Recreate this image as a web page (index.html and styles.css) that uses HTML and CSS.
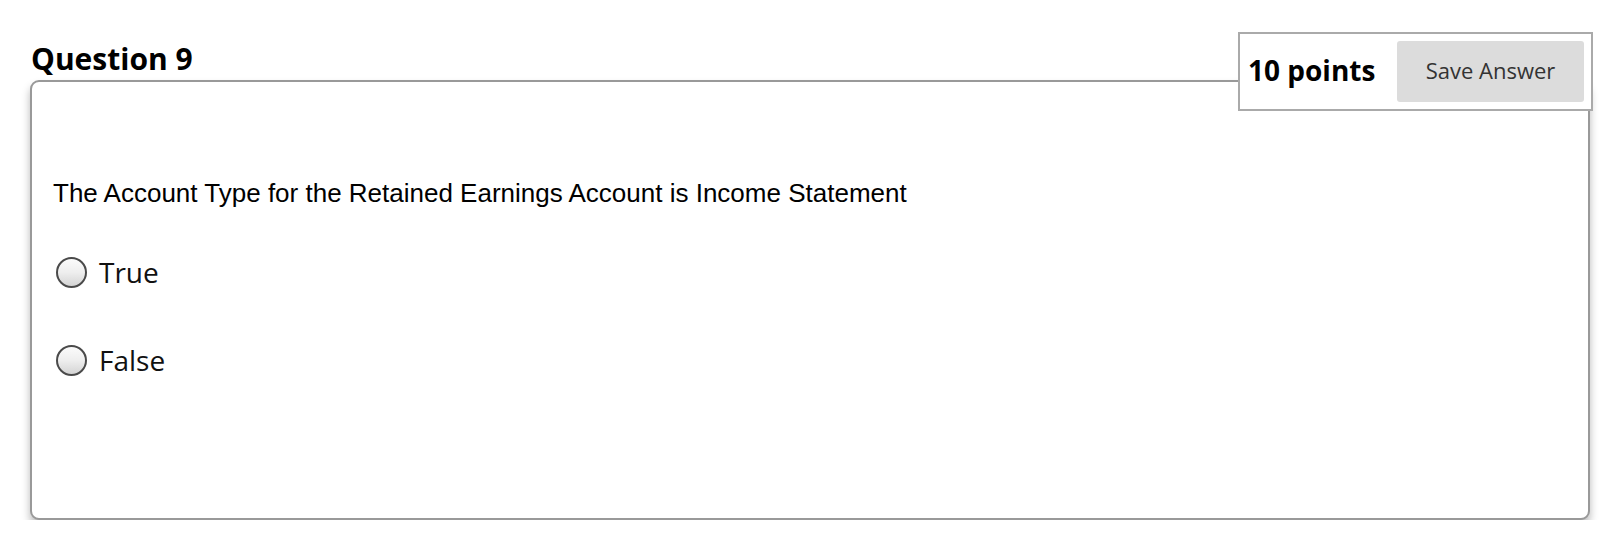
FILE: index.html
```html
<!DOCTYPE html>
<html>
<head>
<meta charset="utf-8">
<link rel="stylesheet" href="styles.css">
</head>
<body>
<div class="page">
  <h2 class="q-title">Question 9</h2>
  <div class="q-box">
    <p class="q-text">The Account Type for the Retained Earnings Account is Income Statement</p>
    <div class="options">
      <label class="option"><span class="radio"></span><span class="opt-label">True</span></label>
      <label class="option"><span class="radio"></span><span class="opt-label">False</span></label>
    </div>
  </div>
  <div class="points-box">
    <span class="points">10 points</span>
    <button class="save-btn">Save Answer</button>
  </div>
</div>
</body>
</html>
```
FILE: styles.css
```css
html, body {
  margin: 0;
  padding: 0;
  background: #fff;
}
.page {
  position: relative;
  padding: 39px 30px 0 30px;
  font-family: "Open Sans", "Liberation Sans", sans-serif;
}
.q-title {
  margin: 0 0 1px 1px;
  font-size: 30px;
  line-height: 40px;
  font-weight: 700;
  color: #000;
}
.q-box {
  box-sizing: border-box;
  width: 1560px;
  height: 440px;
  border: 2px solid #999;
  border-radius: 9px;
  box-shadow: 0 6px 9px rgba(0, 0, 0, 0.28);
  padding: 96px 21px 0 21px;
  background: #fff;
}
.q-text {
  margin: 0;
  font-family: "Liberation Sans", Arial, sans-serif;
  font-size: 26px;
  line-height: 30px;
  color: #000;
}
.options {
  margin-top: 42px;
  display: flex;
  flex-direction: column;
  gap: 44px;
}
.option {
  display: flex;
  align-items: center;
  height: 44px;
  gap: 12px;
}
.radio {
  box-sizing: border-box;
  width: 31px;
  height: 31px;
  margin-left: 3px;
  border-radius: 50%;
  border: 2px solid #4a4a4a;
  background: linear-gradient(to bottom, #fbfbfb 0%, #eeeeee 50%, #d4d4d4 100%);
}
.opt-label {
  font-size: 28px;
  color: #111;
}
.points-box {
  position: absolute;
  top: 32px;
  left: 1238px;
  box-sizing: border-box;
  width: 355px;
  height: 79px;
  border: 2px solid #aaa;
  background: #fff;
  display: flex;
  align-items: center;
  padding: 0 7px 0 8px;
  justify-content: space-between;
}
.points {
  font-size: 28px;
  font-weight: 700;
  color: #000;
  margin-bottom: 4px;
}
.save-btn {
  width: 187px;
  height: 61px;
  border: none;
  border-radius: 3px;
  background: #dcdcdc;
  font-family: "Open Sans", "Liberation Sans", sans-serif;
  font-size: 22px;
  color: #333;
  padding: 0 0 4px 0;
}
```
